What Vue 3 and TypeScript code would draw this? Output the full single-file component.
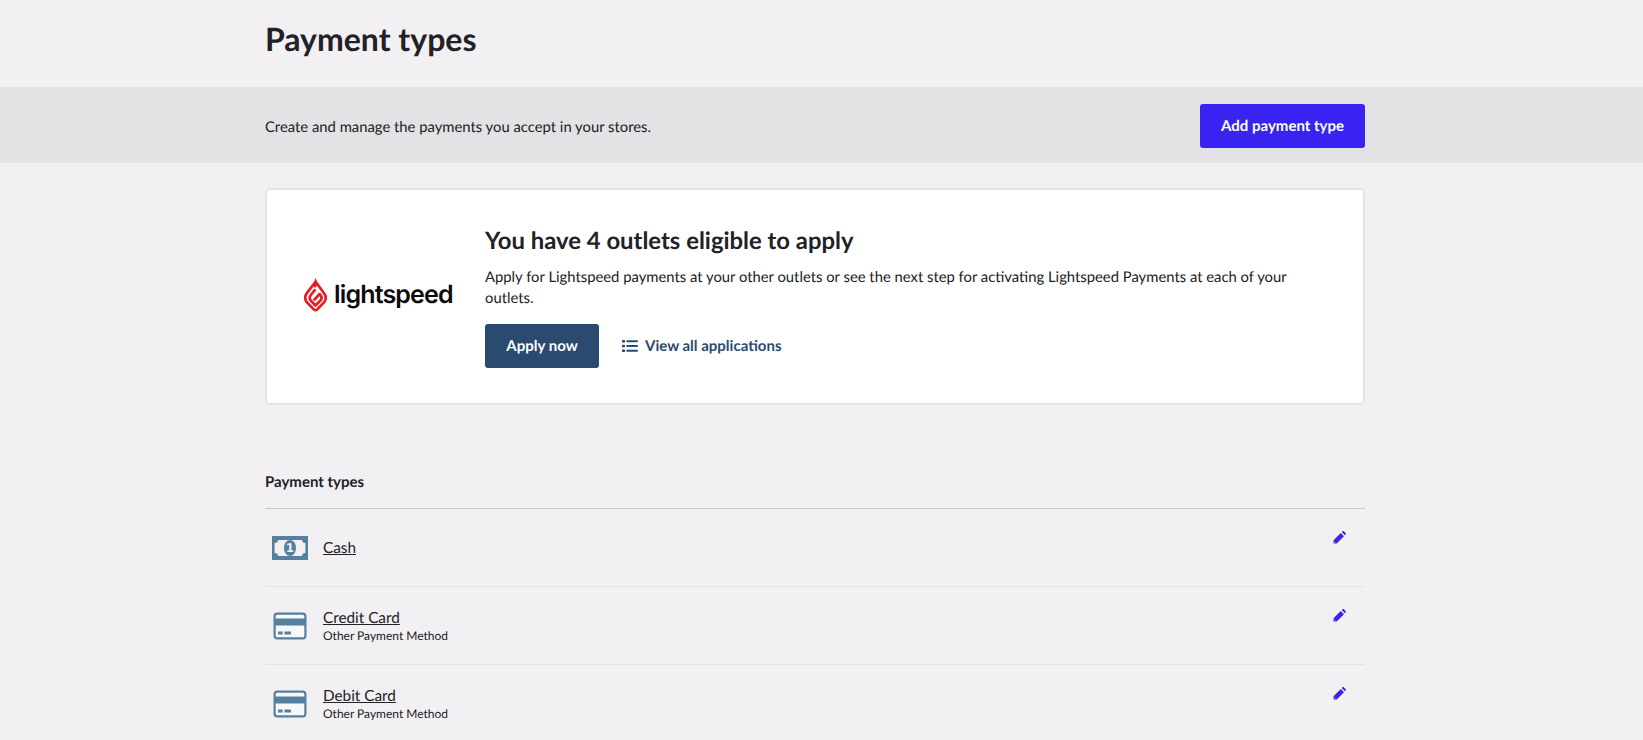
<script setup lang="ts">
interface PaymentType {
  name: string
  sub?: string
  icon: 'cash' | 'card'
}
const rows: PaymentType[] = [
  { name: 'Cash', icon: 'cash' },
  { name: 'Credit Card', sub: 'Other Payment Method', icon: 'card' },
  { name: 'Debit Card', sub: 'Other Payment Method', icon: 'card' },
]
</script>

<template>
  <div class="page">
    <header class="head">
      <div class="wrap"><h1>Payment types</h1></div>
    </header>
    <section class="band">
      <div class="wrap band-in">
        <p>Create and manage the payments you accept in your stores.</p>
        <button class="btn primary">Add payment type</button>
      </div>
    </section>
    <main class="wrap">
      <section class="card">
        <div class="logo">
          <svg class="flame" width="23" height="34" viewBox="0 0 23 34">
            <path fill="#e81c24" d="M11.6 0 L14.2 6 L11 10 L8.6 7 Z" />
            <path fill="none" stroke="#e81c24" stroke-width="2.7" stroke-linejoin="round" d="M10.6 5 L3.2 14.6 C0.8 17.8 0.8 21.8 3.2 24.6 L9.8 31.4 C10.9 32.5 12.1 32.5 13.2 31.4 L19.8 24.6 C22.2 21.8 22.2 18.2 20 15.2 L12.6 5" />
            <path fill="none" stroke="#e81c24" stroke-width="2.7" stroke-linejoin="round" d="M11.4 11.4 L6.8 17 C5.4 18.8 5.4 21 6.9 22.7 L11.5 27.5 L16.5 22.5 C17.9 20.9 17.9 19.3 16.9 17.8 L15.6 16 L9.8 22.4" />
          </svg>
          <span class="wordmark">lightspeed</span>
        </div>
        <div class="card-body">
          <h2>You have 4 outlets eligible to apply</h2>
          <p>Apply for Lightspeed payments at your other outlets or see the next step for activating Lightspeed Payments at each of your outlets.</p>
          <div class="actions">
            <button class="btn navy">Apply now</button>
            <a class="view">
              <svg width="16" height="14" viewBox="0 0 16 14" fill="#2a4a6f">
                <rect x="0" y="1" width="3" height="2.6" rx="0.6" />
                <rect x="0" y="5.7" width="3" height="2.6" rx="0.6" />
                <rect x="0" y="10.4" width="3" height="2.6" rx="0.6" />
                <rect x="4.4" y="1.3" width="11.4" height="2" rx="0.5" />
                <rect x="4.4" y="6" width="11.4" height="2" rx="0.5" />
                <rect x="4.4" y="10.7" width="11.4" height="2" rx="0.5" />
              </svg>
              View all applications
            </a>
          </div>
        </div>
      </section>

      <section class="list">
        <h3>Payment types</h3>
        <div v-for="row in rows" :key="row.name" class="row">
          <div class="icon">
            <svg v-if="row.icon === 'cash'" width="36" height="24" viewBox="0 0 36 24">
              <path fill="#55809f" fill-rule="evenodd" d="M0 0H36V24H0Z M6 4 C6 5.8 5 7 2.6 7 V17 C5 17 6 18.2 6 20 H30 C30 18.2 31 17 33.4 17 V7 C31 7 30 5.8 30 4 Z" />
              <ellipse cx="18" cy="12" rx="6" ry="8" fill="#55809f" />
              <text x="18" y="16.3" text-anchor="middle" class="one">1</text>
            </svg>
            <svg v-else width="34" height="28" viewBox="0 0 34 28">
              <rect x="1.6" y="1.6" width="30.8" height="24.8" rx="2.6" fill="#f8f7f9" stroke="#55809f" stroke-width="2.2" />
              <rect x="2" y="6.5" width="30" height="7" fill="#55809f" />
              <rect x="5" y="19.5" width="4.6" height="3" fill="#55809f" />
              <rect x="11.5" y="19.5" width="6.5" height="3" fill="#55809f" />
            </svg>
          </div>
          <div class="text">
            <a class="name">{{ row.name }}</a>
            <span v-if="row.sub" class="sub">{{ row.sub }}</span>
          </div>
          <svg class="pencil" width="13" height="13" viewBox="0 0 14 14">
            <path fill="#3a22f0" d="M0.6 10 L8.4 2.2 L11.8 5.6 L4 13.4 L0.6 13.4 Z M9.4 1.2 L10.2 0.5 C10.7 0 11.4 0 11.9 0.5 L13.5 2.1 C14 2.6 14 3.3 13.5 3.8 L12.8 4.6 Z" />
            <path fill="#f2f0f3" d="M1.6 11.2 L2.8 12.4 L1.6 12.4 Z" />
          </svg>
        </div>
      </section>
    </main>
  </div>
</template>

<style>
html, body { margin: 0; background: #f2f0f3; overflow: hidden; }
</style>

<style scoped>
.page {
  font-family: Lato, "Liberation Sans", sans-serif;
  color: #212126;
  font-size: 15px;
  height: 740px;
  overflow: hidden;
  text-rendering: geometricPrecision;
}
.wrap { width: 1100px; margin-left: 265px; }
.head { height: 87px; display: flex; align-items: flex-start; }
h1 { margin: 19px 0 0; font-size: 32px; line-height: 40px; font-weight: 700; }
.band { background: #e3e2e4; height: 76px; box-sizing: border-box; padding-top: 2px; display: flex; align-items: center; }
.band-in { display: flex; align-items: center; justify-content: space-between; }
.band p { margin: 1px 0 0; font-size: 14.82px; }
.btn {
  font-family: inherit; font-size: 15px; font-weight: 700; color: #fff;
  border: 0; border-radius: 3px; height: 44px; padding: 0 21px; display: block;
  text-rendering: geometricPrecision;
}
.primary { background: #3a22f0; }
.navy { background: #2a4a6f; width: 114px; padding: 0; }
.card {
  margin-top: 25px; height: 217px; box-sizing: border-box;
  background: #fff; border: 2px solid #e3e2e4; border-radius: 5px;
  display: flex;
}
.logo { width: 218px; flex: none; display: flex; align-items: center; padding-left: 37px; box-sizing: border-box; gap: 7px; padding-bottom: 4px; }
.flame { flex: none; }
.wordmark { font-family: Inter, sans-serif; font-weight: 600; font-size: 25px; letter-spacing: -0.85px; color: #0b0b0d; line-height: 34px; }
.card-body { padding-top: 36px; width: 810px; }
h2 { margin: 0; font-size: 23.87px; line-height: 30px; font-weight: 700; }
.card-body p { margin: 11px 0 0; font-size: 14.82px; line-height: 21px; }
.actions { display: flex; align-items: center; margin-top: 15px; gap: 23px; }
.view { display: flex; align-items: center; gap: 7px; font-weight: 700; font-size: 15px; color: #2a4a6f; }
.list { margin-top: 67px; }
h3 { margin: 0; font-size: 15px; line-height: 20px; font-weight: 700; padding-bottom: 16px; border-bottom: 1px solid #c9c8cc; }
.row { height: 77px; position: relative; display: flex; align-items: center; border-bottom: 1px solid #e3e2e4; }
.icon { width: 58px; flex: none; display: flex; justify-content: center; padding-right: 8px; box-sizing: border-box; }
.text { display: flex; flex-direction: column; padding-top: 1px; }
.name { font-size: 15.3px; line-height: 20px; text-decoration: underline; }
.sub { font-size: 12px; line-height: 16px; }
.pencil { position: absolute; right: 19px; top: 22px; }
.one { font-family: "DejaVu Sans", sans-serif; font-size: 12px; font-weight: 700; fill: #f2f0f3; }
</style>
